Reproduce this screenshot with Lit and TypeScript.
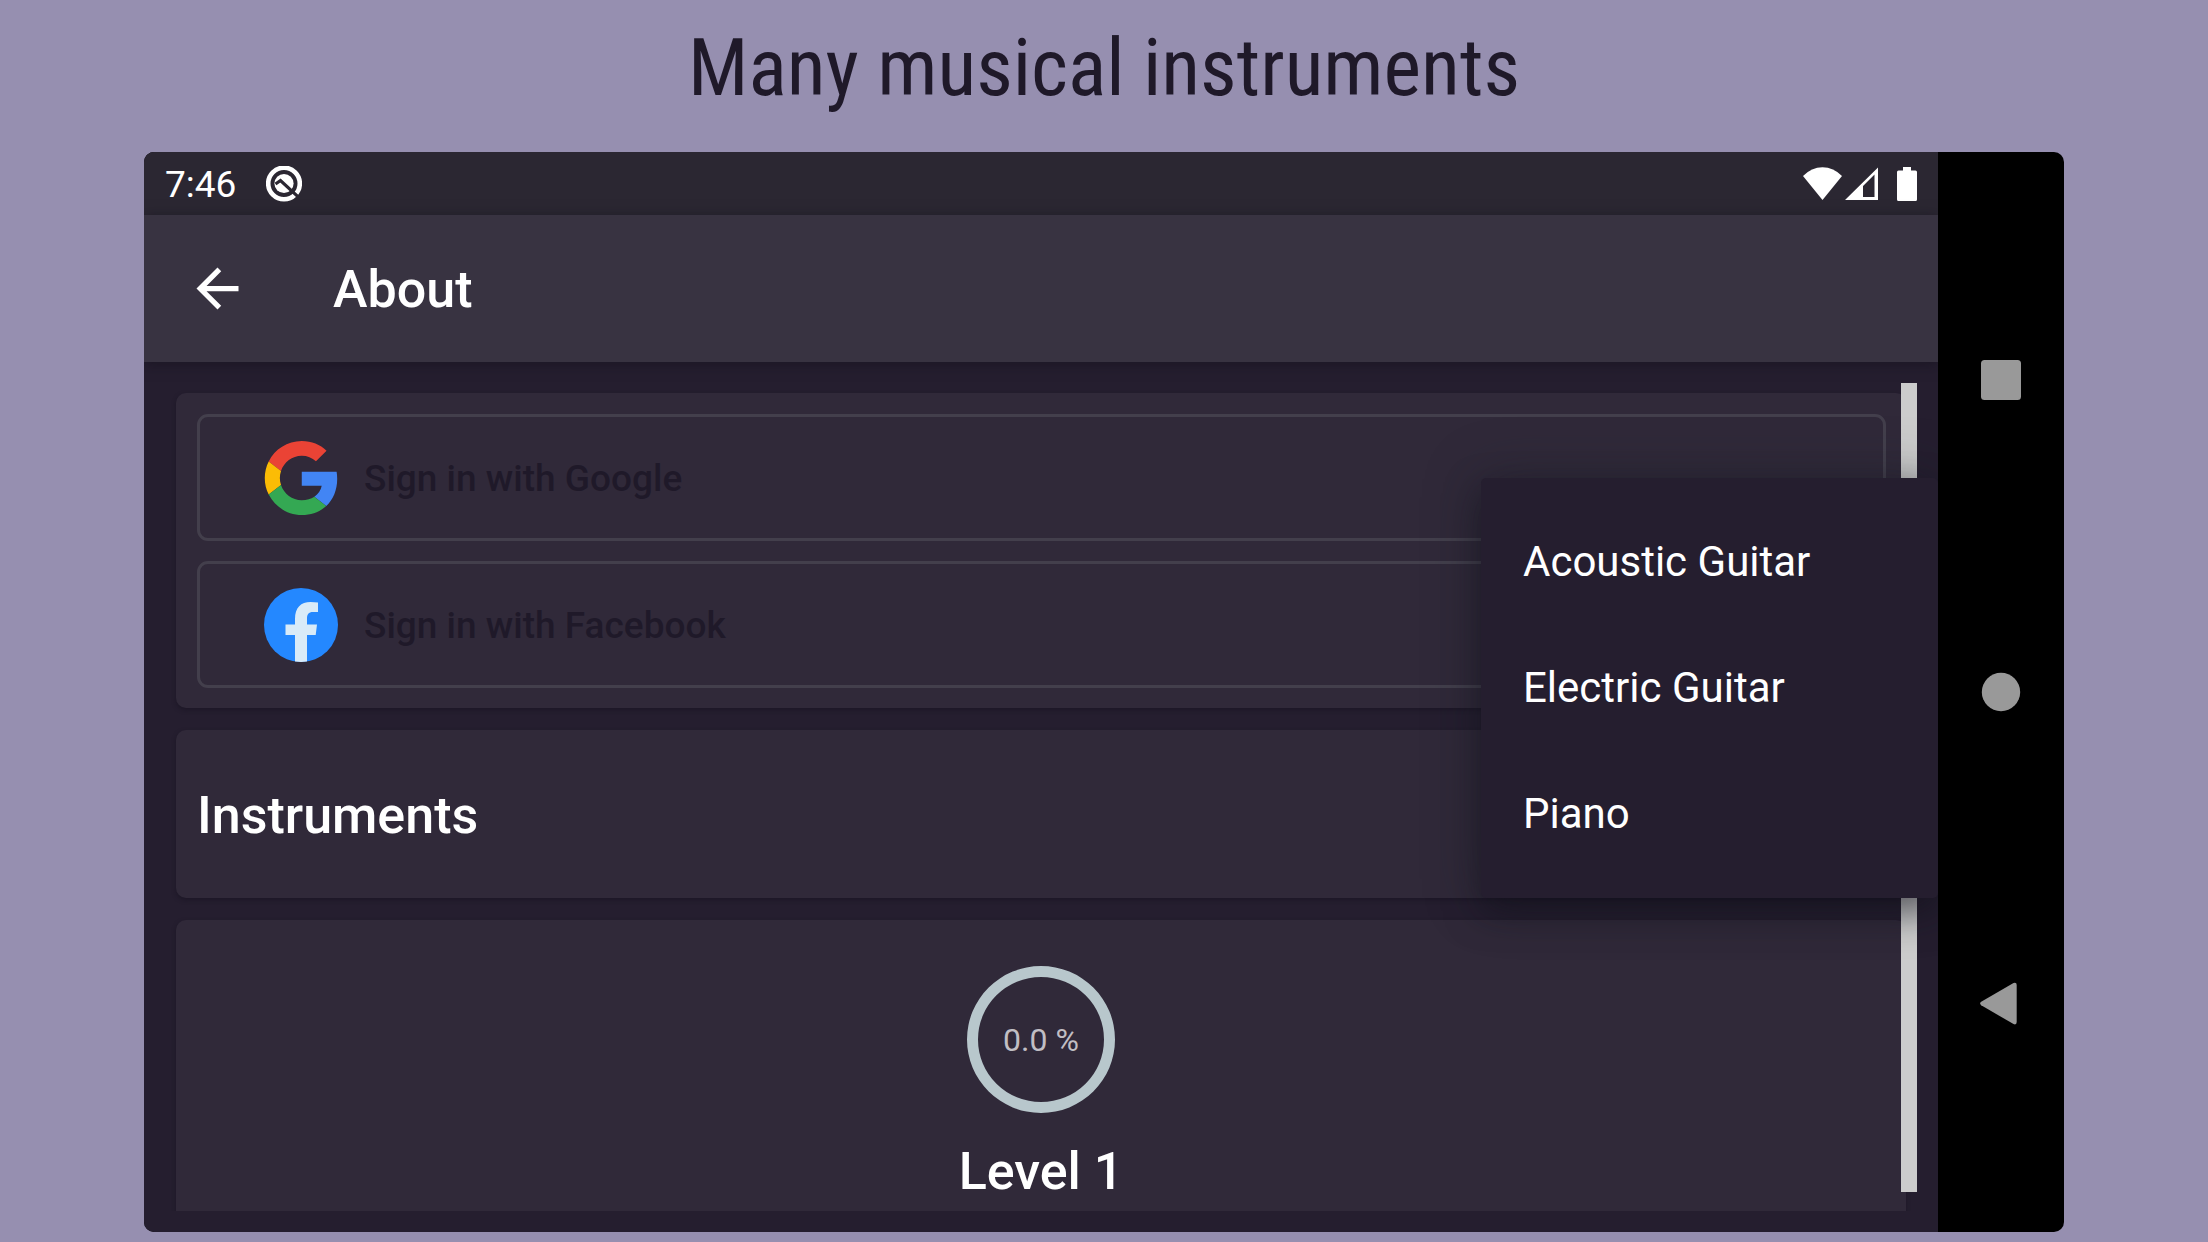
import { LitElement, html, css, svg } from "lit";
import { customElement, property } from "lit/decorators.js";

const googleLogo = svg`
  <path fill="#EA4335" d="M24 9.5c3.54 0 6.71 1.22 9.21 3.6l6.85-6.85C35.9 2.38 30.47 0 24 0 14.62 0 6.51 5.38 2.56 13.22l7.98 6.19C12.43 13.72 17.74 9.5 24 9.5z"/>
  <path fill="#4285F4" d="M46.98 24.55c0-1.57-.15-3.09-.38-4.55H24v9.02h12.94c-.58 2.96-2.26 5.48-4.78 7.18l7.73 6c4.51-4.18 7.09-10.36 7.09-17.65z"/>
  <path fill="#FBBC05" d="M10.53 28.59c-.48-1.45-.76-2.99-.76-4.59s.27-3.14.76-4.59l-7.98-6.19C.92 16.46 0 20.12 0 24c0 3.88.92 7.54 2.56 10.78l7.97-6.19z"/>
  <path fill="#34A853" d="M24 48c6.48 0 11.93-2.13 15.89-5.81l-7.73-6c-2.15 1.45-4.92 2.3-8.16 2.3-6.26 0-11.57-4.22-13.47-9.91l-7.98 6.19C6.51 42.62 14.62 48 24 48z"/>`;

const facebookLogo = svg`
  <circle cx="37" cy="37" r="37" fill="#2488ff"/>
  <path fill="#d9ebf8" d="M31 73.6V47h-9.5V36.500H31V31c0-11.500 6-17 15.500-17q4 0 7.500.5V24h-5c-4.500 0-6 2.500-6 6.500v6h10L51.700 47H43v26.600q-6 .8-12 0z"/>`;

/** Outlined sign-in button with a provider logo. */
@customElement("sign-in-button")
export class SignInButton extends LitElement {
  @property() provider = "google";

  static styles = css`
    :host { display: block; }
    .button {
      display: flex;
      align-items: center;
      gap: 26px;
      width: 100%;
      height: 127px;
      padding: 0 64px;
      border: 3px solid #433f4c;
      border-radius: 11px;
      background: none;
      color: #1f1929;
      font: 500 37px/44px Roboto, sans-serif;
      text-align: left;
      box-sizing: border-box;
    }
    .logo { width: 74px; height: 74px; flex: none; }
    .label { padding-top: 2px; }
  `;

  render() {
    const google = this.provider === "google";
    return html`
      <button class="button" type="button">
        ${google
          ? html`<svg class="logo" viewBox="0 0 47 48" aria-hidden="true">${googleLogo}</svg>`
          : html`<svg class="logo" viewBox="0 0 74 74" aria-hidden="true">${facebookLogo}</svg>`}
        <span class="label">Sign in with ${google ? "Google" : "Facebook"}</span>
      </button>`;
  }
}

@customElement("app-root")
export class AppRoot extends LitElement {
  static styles = css`
    :host { display: block; }
    * { box-sizing: border-box; }
    h1, h2, p, ul { margin: 0; padding: 0; font-weight: inherit; }
    button { font: inherit; color: inherit; background: none; border: 0; padding: 0; }

    .page {
      display: flex;
      flex-direction: column;
      height: 100vh;
      padding: 0 144px 10px;
      background: #968fb0;
      color: #fff;
      font-family: Roboto, sans-serif;
    }
    .headline {
      flex: none;
      height: 152px;
      padding-top: 20px;
      color: #1f1929;
      font: 400 80px/96px "Roboto Condensed", "Liberation Sans Narrow", Roboto, sans-serif;
      text-align: center;
      white-space: nowrap;
    }

    .device {
      flex: 1;
      min-height: 0;
      display: flex;
      border-radius: 10px;
      overflow: hidden;
      background: #000;
    }
    .screen {
      flex: 1;
      min-width: 0;
      display: flex;
      flex-direction: column;
      overflow: hidden;
      background: #251e2f;
    }

    .status {
      flex: none;
      display: flex;
      align-items: center;
      height: 63px;
      padding: 0 21px;
      background: #2b2732;
      font-size: 37px;
      line-height: 44px;
    }
    .clock { padding-top: 3px; }
    .badge { width: 36px; height: 36px; margin-left: 30px; }
    .signals { display: flex; align-items: center; margin-left: auto; }
    .wifi { width: 39px; height: 34px; }
    .cell { width: 33px; height: 34px; margin-left: 3px; }
    .battery { width: 20px; height: 34px; margin-left: 19px; }

    .bar {
      flex: none;
      z-index: 1;
      display: flex;
      align-items: center;
      gap: 84px;
      height: 147px;
      padding: 0 42px;
      background: #383341;
      box-shadow: 0 2px 12px rgba(15, 13, 24, 0.5);
    }
    .bar .title { padding-top: 3px; }
    .back { width: 63px; height: 63px; }
    .back svg { display: block; width: 63px; height: 63px; }
    .title { font-size: 52px; line-height: 62px; font-weight: 500; }

    .content {
      flex: 1;
      min-height: 0;
      position: relative;
      display: flex;
      flex-direction: column;
      gap: 22px;
      margin-bottom: 21px;
      padding: 31px 32px 0;
      clip-path: inset(0);
    }
    .card {
      flex: none;
      position: relative;
      border-radius: 10px;
      background: #302939;
      box-shadow: 0 2px 4px rgba(20, 16, 30, 0.5);
    }
    .accounts { display: grid; gap: 20px; padding: 21px 20px 20px 21px; }
    .instruments { display: flex; align-items: center; height: 168px; padding: 4px 21px 0; }
    .progress {
      display: flex;
      flex-direction: column;
      align-items: center;
      gap: 28px;
      padding: 46px 21px;
    }
    .ring {
      display: grid;
      place-items: center;
      width: 148px;
      height: 147px;
      border: 11px solid #b8c7cc;
      border-radius: 50%;
      color: #c1bec4;
      font-size: 32px;
      line-height: 38px;
    }

    .thumb {
      position: absolute;
      top: 21px;
      right: 21px;
      bottom: 19px;
      width: 16px;
      background: #ccc;
    }
    .menu {
      position: absolute;
      z-index: 2;
      right: -32px;
      bottom: 0;
      width: 457px;
      padding: 21px 0;
      border-radius: 5px;
      background: #251e2f;
      box-shadow: 0 14px 34px rgba(14, 12, 22, 0.5), 0 0 56px rgba(30, 36, 46, 0.35);
      list-style: none;
    }
    .option {
      display: block;
      width: 100%;
      height: 126px;
      padding: 0 42px;
      font-size: 42px;
      line-height: 50px;
      text-align: left;
    }

    .nav {
      flex: none;
      display: flex;
      flex-direction: column;
      width: 126px;
      padding: 72px 0;
    }
    .key { flex: 1; display: grid; place-items: center; }
    .key svg { display: block; width: 42px; height: 44px; fill: #999; }
  `;

  private instruments = ["Acoustic Guitar", "Electric Guitar", "Piano"];

  render() {
    return html`
      <main class="page">
        <h1 class="headline">Many musical instruments</h1>
        <div class="device">
          <div class="screen">
            <div class="status">
              <span class="clock">7:46</span>
              <svg class="badge" viewBox="0 0 36 36" aria-hidden="true">
                <circle cx="18" cy="17.500" r="15.800" fill="none" stroke="#fff" stroke-width="4.600"/>
                <circle cx="18" cy="17.500" r="9.600" fill="#fff"/>
                <path d="M9.500 18L14.500 14.500L33 31.700" fill="none" stroke="#2b2732" stroke-width="3.200"/>
              </svg>
              <div class="signals">
                <svg class="wifi" viewBox="0 0 39 34" aria-hidden="true">
                  <path fill="#fff" d="M19.500 33L0 9Q8.500 .2 19.500 .2T39 9z"/>
                </svg>
                <svg class="cell" viewBox="0 0 33 34" aria-hidden="true">
                  <path fill="#fff" fill-rule="evenodd" d="M0 33L33 .5v32.500zM18 19v11h11.500V7.500z"/>
                </svg>
                <svg class="battery" viewBox="0 0 20 34" aria-hidden="true">
                  <path fill="#fff" d="M6 0h8v3.500h4.500Q20 3.500 20 5v27.500q0 1.500-1.500 1.500h-17Q0 34 0 32.500V5q0-1.500 1.500-1.500H6z"/>
                </svg>
              </div>
            </div>
            <header class="bar">
              <button class="back" type="button" aria-label="Back">
                <svg viewBox="0 0 24 24" aria-hidden="true">
                  <path fill="#fff" d="M20 11H7.830l5.590-5.590L12 4l-8 8 8 8 1.410-1.410L7.830 13H20v-2z"/>
                </svg>
              </button>
              <h2 class="title">About</h2>
            </header>
            <div class="content">
              <section class="card accounts">
                <sign-in-button provider="google"></sign-in-button>
                <sign-in-button provider="facebook"></sign-in-button>
              </section>
              <section class="card instruments">
                <h2 class="title">Instruments</h2>
                <ul class="menu">
                  ${this.instruments.map(
                    (name) => html`<li><button class="option" type="button">${name}</button></li>`
                  )}
                </ul>
              </section>
              <section class="card progress">
                <div class="ring"><span>0.0 %</span></div>
                <p class="title">Level 1</p>
              </section>
              <div class="thumb"></div>
            </div>
          </div>
          <nav class="nav">
            <button class="key" type="button" aria-label="Recent apps">
              <svg viewBox="0 0 42 44"><rect x="1" y="2" width="40" height="40" rx="3.500"/></svg>
            </button>
            <button class="key" type="button" aria-label="Home">
              <svg viewBox="0 0 42 44"><circle cx="21" cy="22" r="19.200"/></svg>
            </button>
            <button class="key" type="button" aria-label="Back">
              <svg viewBox="0 0 42 44"><path d="M1.200 19.800L33.500 1Q36.700 0 36.700 3V40Q36.700 43.300 33.500 42.100L1.200 23.200Q-1 21.500 1.200 19.800z"/></svg>
            </button>
          </nav>
        </div>
      </main>`;
  }
}
